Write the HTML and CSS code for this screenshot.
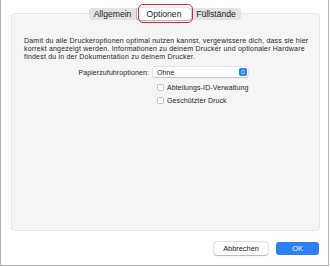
FILE: index.html
```html
<!DOCTYPE html>
<html lang="de">
<head>
    <meta charset="UTF-8">
    <meta name="viewport" content="width=device-width, initial-scale=1.0">
    <title>Druckeroptionen</title>
    <link rel="stylesheet" href="styles.css">
</head>
<body>
    <div class="window">
        <div class="tabs-row">
            <div class="tabs">
                <span class="tab tab-first">Allgemein</span>
                <span class="tab active">Optionen</span>
                <span class="tab tab-last">Füllstände</span>
            </div>
            <span class="highlight"></span>
        </div>

        <div class="panel">
            <p class="intro">Damit du alle Druckeroptionen optimal nutzen kannst, vergewissere dich, dass sie hier korrekt angezeigt werden. Informationen zu deinem Drucker und optionaler Hardware findest du in der Dokumentation zu deinem Drucker.</p>

            <div class="form">
                <div class="form-row">
                    <span class="label">Papierzufuhroptionen:</span>
                    <div class="select">
                        <span>Ohne</span>
                        <span class="stepper">
                            <svg width="8" height="8" viewBox="0 0 8 8">
                                <path d="M2.6 3.2 L4 1.8 L5.4 3.2 M2.6 4.8 L4 6.2 L5.4 4.8" fill="none" stroke="#fff" stroke-width="0.9" stroke-linecap="round" stroke-linejoin="round"/>
                            </svg>
                        </span>
                    </div>
                </div>
                <label class="check-row"><span class="box"></span>Abteilungs-ID-Verwaltung</label>
                <label class="check-row"><span class="box"></span>Geschützter Druck</label>
            </div>
        </div>

        <div class="actions">
            <button class="btn">Abbrechen</button>
            <button class="btn btn-primary">OK</button>
        </div>
    </div>
</body>
</html>
```

FILE: styles.css
```css
* {
    box-sizing: border-box;
}

body {
    margin: 0;
    background-color: #ffffff;
    font-family: "Liberation Sans", Arial, sans-serif;
    color: #262626;
}

.window {
    width: 329px;
    height: 266px;
    border: 1px solid #b4b4b4;
    border-top: none;
    background-color: #ffffff;
    padding-top: 8px;
}

/* segmented control on top of the panel */
.tabs-row {
    position: relative;
    display: flex;
    justify-content: center;
    z-index: 1;
    margin-left: 1px;
}

.tabs {
    display: flex;
    height: 12px;
    background-color: #e3e3e3;
    border-radius: 3px;
    font-size: 8.6px;
}

.tab {
    display: flex;
    align-items: center;
    justify-content: center;
    width: 50px;
    color: #222;
}

.tab-first {
    width: 48px;
    border-right: 1px solid #c9c9c9;
}

.tab-last {
    width: 50px;
}

.tab.active {
    width: 54px;
    background-color: #ffffff;
    border-radius: 3px;
    box-shadow: 0 0 0 0.5px rgba(0, 0, 0, 0.15), 0 0.5px 1px rgba(0, 0, 0, 0.2);
}

/* red marker around the active tab */
.highlight {
    position: absolute;
    left: 136px;
    top: -4px;
    width: 55px;
    height: 19px;
    border: 1.5px solid #e0252b;
    border-radius: 5px;
}

.panel {
    width: 309px;
    height: 218px;
    margin: -7px 0 0 10px;
    background-color: #f5f5f5;
    border: 1px solid #e6e6e6;
    border-radius: 4px;
    padding: 23px 8px 0 12px;
}

.intro {
    margin: 0;
    font-size: 7px;
    letter-spacing: 0.2px;
    line-height: 8.2px;
    color: #262626;
}

.form {
    display: flex;
    flex-direction: column;
    margin-top: 5px;
}

.form-row {
    display: flex;
    align-items: center;
    height: 11px;
    font-size: 7px;
    letter-spacing: 0.1px;
}

.label {
    width: 129px;
    text-align: right;
    padding-right: 4px;
}

.select {
    display: flex;
    align-items: center;
    justify-content: space-between;
    width: 95px;
    height: 10px;
    padding: 0 1px 0 4px;
    background-color: #ffffff;
    border-radius: 2px;
    box-shadow: 0 0 0 0.5px rgba(0, 0, 0, 0.12), 0 0.5px 1px rgba(0, 0, 0, 0.15);
}

.stepper {
    display: flex;
    width: 8px;
    height: 8px;
    background-color: #2b7cf6;
    border-radius: 2px;
}

.check-row {
    display: flex;
    align-items: center;
    height: 13px;
    margin-left: 133px;
    font-size: 7px;
    letter-spacing: 0.1px;
}

.check-row:first-of-type {
    margin-top: 3px;
}

.box {
    width: 7px;
    height: 7px;
    margin-right: 3px;
    background-color: #ffffff;
    border: 0.5px solid #c4c4c4;
    border-radius: 1.5px;
}

.actions {
    display: flex;
    justify-content: flex-end;
    gap: 8px;
    margin: 11px 9px 0 0;
}

.btn {
    height: 13px;
    width: 54px;
    padding: 0;
    border: none;
    border-radius: 3px;
    background-color: #ffffff;
    box-shadow: 0 0 0 0.5px rgba(0, 0, 0, 0.2), 0 0.5px 1px rgba(0, 0, 0, 0.2);
    font-family: "Liberation Sans", Arial, sans-serif;
    font-size: 7.4px;
    color: #222;
}

.btn-primary {
    width: 43px;
    background-color: #2d7ff7;
    color: #ffffff;
    box-shadow: none;
}
```
